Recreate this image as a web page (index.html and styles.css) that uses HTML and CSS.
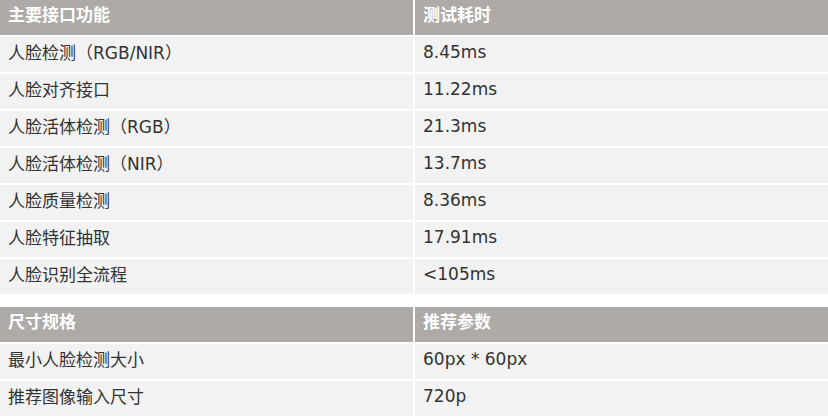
FILE: index.html
```html
<!DOCTYPE html>
<html lang="zh-CN">
<head>
<meta charset="utf-8">
<title>性能参数</title>
<link rel="stylesheet" href="styles.css">
</head>
<body>
<div class="spec">
  <div class="cell head">主要接口功能</div><div class="cell head">测试耗时</div>
  <div class="cell">人脸检测（RGB/NIR）</div><div class="cell">8.45ms</div>
  <div class="cell">人脸对齐接口</div><div class="cell">11.22ms</div>
  <div class="cell">人脸活体检测（RGB）</div><div class="cell">21.3ms</div>
  <div class="cell">人脸活体检测（NIR）</div><div class="cell">13.7ms</div>
  <div class="cell">人脸质量检测</div><div class="cell">8.36ms</div>
  <div class="cell">人脸特征抽取</div><div class="cell">17.91ms</div>
  <div class="cell">人脸识别全流程</div><div class="cell">&lt;105ms</div>
</div>
<div class="spec second">
  <div class="cell head">尺寸规格</div><div class="cell head">推荐参数</div>
  <div class="cell">最小人脸检测大小</div><div class="cell">60px * 60px</div>
  <div class="cell">推荐图像输入尺寸</div><div class="cell">720p</div>
</div>
</body>
</html>
```

FILE: styles.css
```css
html, body {
  margin: 0;
  padding: 0;
  background: #ffffff;
}
body {
  font-family: "DejaVu Sans", "Noto Sans CJK SC", sans-serif;
  font-size: 17px;
  color: #333333;
}
.spec {
  display: grid;
  grid-template-columns: 413px 1fr;
  grid-auto-rows: 35px;
  gap: 2px;
}
.second {
  margin-top: 13px;
}
.cell {
  background: #f2f2f2;
  padding: 0 8px 6px;
  display: flex;
  align-items: center;
  white-space: nowrap;
}
.head {
  background: #aeaaa8;
  color: #ffffff;
  font-weight: bold;
  padding-bottom: 8px;
}
```
